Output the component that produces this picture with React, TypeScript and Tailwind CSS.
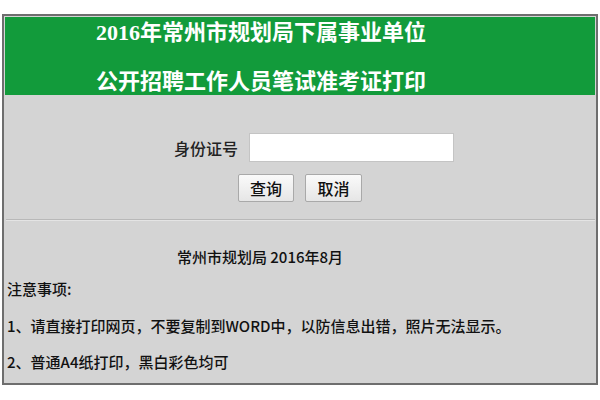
export default function App() {
  const body = { fontFamily: '"Noto Sans CJK SC", "Liberation Sans", sans-serif' };
  const head = { fontFamily: '"Liberation Serif", "Noto Sans CJK SC", serif' };

  return (
    <div className="w-[600px] h-[400px] bg-white pt-[14px] pl-[2px]">
      <div className="w-[596px] border-2 border-[#6e6e6e] bg-[#d4d4d4] p-[1px]" style={body}>
        <div className="bg-[#129b3b] h-[78px] pt-[3px] pr-[78px] flex flex-col gap-[23px] text-white font-bold text-[22px] leading-[26px] text-center">
          <div style={head}>2016年常州市规划局下属事业单位</div>
          <div style={head}>公开招聘工作人员笔试准考证打印</div>
        </div>

        <div className="flex flex-col items-center pt-[38px]">
          <div className="flex items-center gap-[11px] pl-[28px]">
            <span className="text-[16px] font-medium text-[#222] leading-none">身份证号</span>
            <input
              type="text"
              className="w-[205px] h-[29px] bg-white border border-[#c4c4c4] outline-none"
            />
          </div>
          <div className="flex gap-[11px] mt-[12px]">
            <button className="w-[56px] h-[28px] bg-gradient-to-b from-[#fafafa] to-[#e6e6e6] border border-[#a9a9a9] rounded-[2px] text-[16px] font-medium text-[#111]">
              查询
            </button>
            <button className="w-[57px] h-[28px] bg-gradient-to-b from-[#fafafa] to-[#e6e6e6] border border-[#a9a9a9] rounded-[2px] text-[16px] font-medium text-[#111]">
              取消
            </button>
          </div>
        </div>

        <div className="mt-[17px] border-t border-[#b8b8b8] border-b border-b-[#e4e4e4] ml-[1px]" />

        <div className="text-[15px] font-medium text-[#111] leading-[22px]">
          <div className="pt-[25px] pr-[80px] text-center">常州市规划局 2016年8月</div>
          <div className="mt-[10px] pl-[2px]">注意事项:</div>
          <div className="mt-[15px] pl-[2px]">1、请直接打印网页，不要复制到WORD中，以防信息出错，照片无法显示。</div>
          <div className="mt-[14px] pl-[2px] pb-[9px]">2、普通A4纸打印，黑白彩色均可</div>
        </div>
      </div>
    </div>
  );
}
